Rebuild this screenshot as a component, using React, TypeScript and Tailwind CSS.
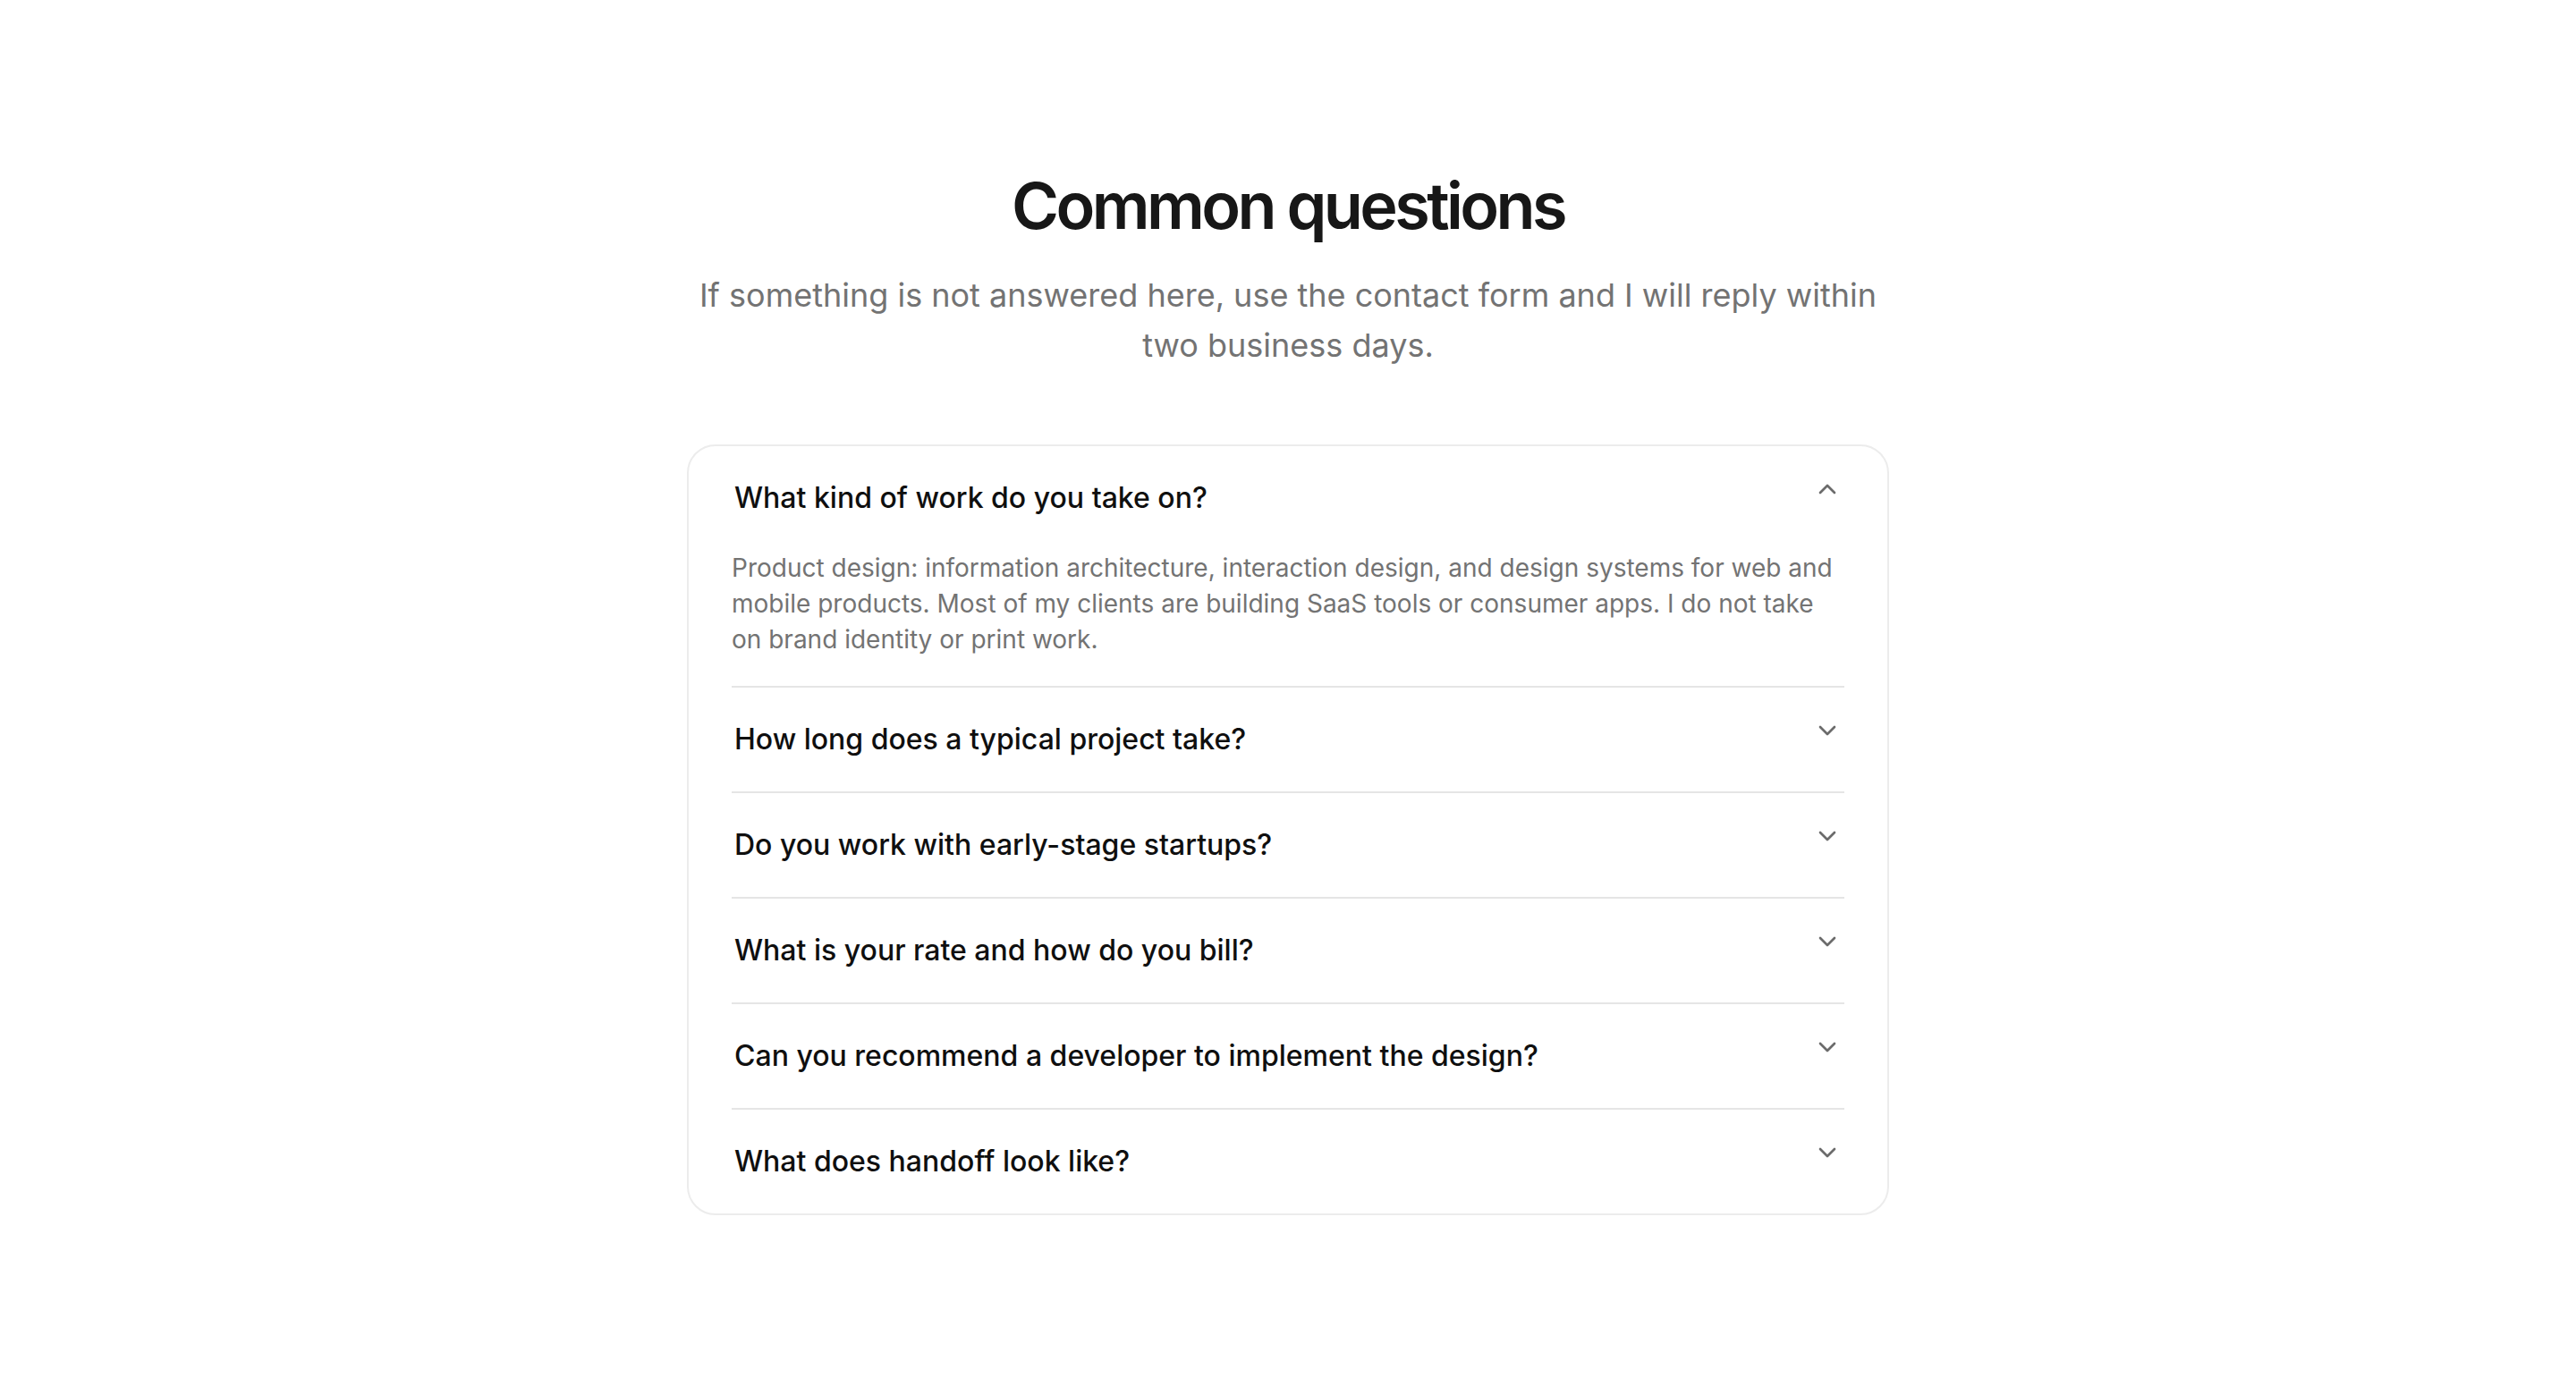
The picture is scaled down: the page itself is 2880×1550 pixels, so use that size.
import { useState } from "react";
import { ChevronDown, ChevronUp } from "lucide-react";

const faqs = [
  {
    q: "What kind of work do you take on?",
    a: "Product design: information architecture, interaction design, and design systems for web and mobile products. Most of my clients are building SaaS tools or consumer apps. I do not take on brand identity or print work.",
  },
  {
    q: "How long does a typical project take?",
    a: "Most projects run between six and twelve weeks, depending on scope. Smaller audits or design sprints can be done in two to three weeks.",
  },
  {
    q: "Do you work with early-stage startups?",
    a: "Yes. A good share of my work is with seed and Series A teams that need to get a first version in front of users quickly.",
  },
  {
    q: "What is your rate and how do you bill?",
    a: "I bill weekly at a fixed rate agreed before the project starts. Invoices go out every two weeks.",
  },
  {
    q: "Can you recommend a developer to implement the design?",
    a: "I work with a small group of frontend developers I trust and am happy to make an introduction.",
  },
  {
    q: "What does handoff look like?",
    a: "You get organised Figma files, a component inventory, and a walkthrough call with your engineering team.",
  },
];

export default function App() {
  const [open, setOpen] = useState<number | null>(0);

  return (
    <div className="min-h-screen bg-white font-['Inter',sans-serif] flex flex-col items-center pt-[194px] pb-24">
      <h1 className="text-[72px] leading-[72px] font-semibold tracking-tighter text-[#171717]">
        Common questions
      </h1>
      <p className="mt-[36px] max-w-[1344px] text-center text-[36px] leading-[56px] text-[#737373]">
        If something is not answered here, use the contact form and I will
        reply within two business days.
      </p>

      <div className="mt-[83px] w-[1344px] rounded-[32px] border-2 border-[#ececec] bg-white px-12">
        {faqs.map((item, i) => {
          const isOpen = open === i;
          return (
            <div
              key={item.q}
              className={i < faqs.length - 1 ? "border-b-2 border-[#e5e5e5]" : ""}
            >
              <button
                onClick={() => setOpen(isOpen ? null : i)}
                className="w-full flex items-start justify-between gap-8 py-8 px-[3px] text-left"
              >
                <span className="text-[32px] leading-[52px] font-medium text-[#0f0f0f]">
                  {item.q}
                </span>
                {isOpen ? (
                  <ChevronUp className="w-8 h-8 shrink-0 text-[#6b6b6b]" />
                ) : (
                  <ChevronDown className="w-8 h-8 shrink-0 text-[#6b6b6b]" />
                )}
              </button>
              {isOpen && (
                <p className="pb-8 text-[28px] leading-[40px] text-[#737373]">
                  {item.a}
                </p>
              )}
            </div>
          );
        })}
      </div>
    </div>
  );
}
